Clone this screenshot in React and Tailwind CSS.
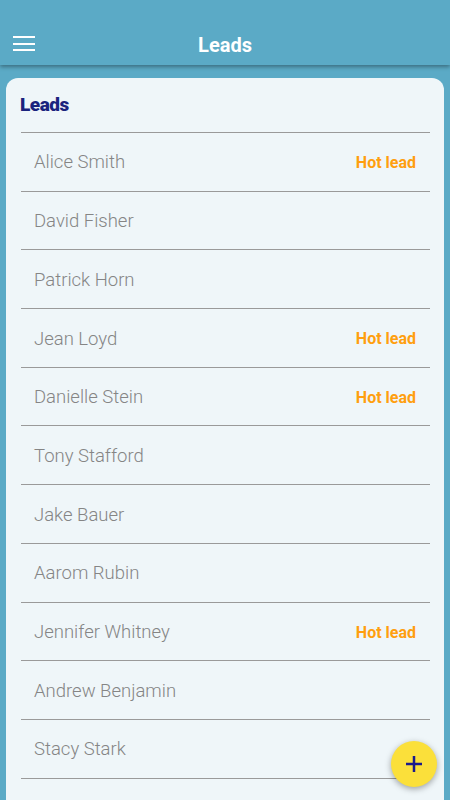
import React from "react";

const leads = [
  { name: "Alice Smith", hot: true },
  { name: "David Fisher", hot: false },
  { name: "Patrick Horn", hot: false },
  { name: "Jean Loyd", hot: true },
  { name: "Danielle Stein", hot: true },
  { name: "Tony Stafford", hot: false },
  { name: "Jake Bauer", hot: false },
  { name: "Aarom Rubin", hot: false },
  { name: "Jennifer Whitney", hot: true },
  { name: "Andrew Benjamin", hot: false },
  { name: "Stacy Stark", hot: false },
];

function App() {
  return (
    <div className="relative h-[800px] w-[450px] overflow-hidden bg-[#5baac6] font-['Roboto',sans-serif] flex flex-col">
      {/* top bar */}
      <header className="relative z-10 h-[65px] shrink-0 bg-[#5baac6] shadow-[0_2px_4px_rgba(0,0,0,0.35)] flex items-end pb-[10px]">
        <button className="ml-[13px] mb-[4px] flex flex-col gap-[4.5px] w-[22px]">
          <span className="block h-[2px] w-full bg-white"></span>
          <span className="block h-[2px] w-full bg-white"></span>
          <span className="block h-[2px] w-full bg-white"></span>
        </button>
        <h1 className="absolute left-0 right-0 bottom-[10px] text-center text-white text-[20px] font-bold leading-none">
          Leads
        </h1>
      </header>

      {/* card */}
      <div className="mx-[6px] mt-[13px] flex-1 rounded-t-[12px] bg-[#eff6f9] pl-[15px] pr-[14px]">
        <div className="h-[54px] flex items-center pt-[1px]">
          <h2 className="-ml-[1px] text-[19px] font-black text-[#1a237e] tracking-tight">Leads</h2>
        </div>
        <ul className="border-b border-[#9a9a9a]">
          {leads.map((lead) => (
            <li
              key={lead.name}
              className="h-[58.7px] border-t border-[#9a9a9a] flex items-center justify-between pl-[13px] pr-[14px] pt-[3px]"
            >
              <span className="text-[18.5px] font-light text-[#858585]">{lead.name}</span>
              {lead.hot && (
                <span className="text-[16px] font-bold text-[#ff9f0f]">Hot lead</span>
              )}
            </li>
          ))}
        </ul>
      </div>

      {/* add button */}
      <button className="absolute right-[13px] bottom-[13px] h-[46px] w-[46px] rounded-full bg-[#fbe03a] shadow-[0_2px_6px_rgba(0,0,0,0.35)] flex items-center justify-center">
        <svg width="18" height="18" viewBox="0 0 18 18">
          <path d="M9 1v16M1 9h16" stroke="#1a1a8c" strokeWidth="2.5" />
        </svg>
      </button>
    </div>
  );
}

export default App;
